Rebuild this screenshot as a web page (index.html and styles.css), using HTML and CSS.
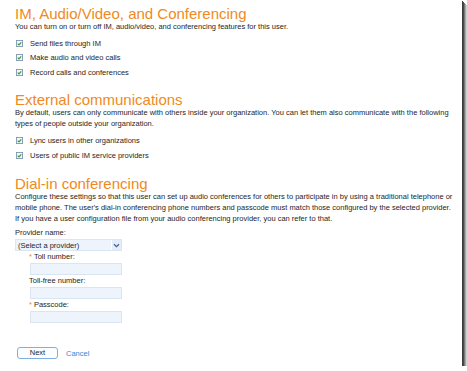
FILE: index.html
```html
<!DOCTYPE html>
<html>
<head>
<meta charset="utf-8">
<link rel="stylesheet" href="styles.css">
</head>
<body>
<div class="frame">
  <section class="sec sec-im">
    <h2 class="title">IM, Audio/Video, and Conferencing</h2>
    <p class="desc">You can turn on or turn off IM, audio/video, and conferencing features for this user.</p>
    <ul class="checks">
      <li><span class="cb"><svg viewBox="0 0 8 8" width="8" height="8"><rect x="0.5" y="0.5" width="7" height="7" fill="#f4f7fb" stroke="#7d93ad"/><path d="M2 4.2 L3.4 5.6 L6 2.6" fill="none" stroke="#2e9c3a" stroke-width="1.3"/></svg></span>Send files through IM</li>
      <li><span class="cb"><svg viewBox="0 0 8 8" width="8" height="8"><rect x="0.5" y="0.5" width="7" height="7" fill="#f4f7fb" stroke="#7d93ad"/><path d="M2 4.2 L3.4 5.6 L6 2.6" fill="none" stroke="#2e9c3a" stroke-width="1.3"/></svg></span>Make audio and video calls</li>
      <li><span class="cb"><svg viewBox="0 0 8 8" width="8" height="8"><rect x="0.5" y="0.5" width="7" height="7" fill="#f4f7fb" stroke="#7d93ad"/><path d="M2 4.2 L3.4 5.6 L6 2.6" fill="none" stroke="#2e9c3a" stroke-width="1.3"/></svg></span>Record calls and conferences</li>
    </ul>
  </section>
  <section class="sec sec-ext">
    <h2 class="title">External communications</h2>
    <p class="desc desc-wide">By default, users can only communicate with others inside your organization. You can let them also communicate with the following types of people outside your organization.</p>
    <ul class="checks checks-ext">
      <li><span class="cb"><svg viewBox="0 0 8 8" width="8" height="8"><rect x="0.5" y="0.5" width="7" height="7" fill="#f4f7fb" stroke="#7d93ad"/><path d="M2 4.2 L3.4 5.6 L6 2.6" fill="none" stroke="#2e9c3a" stroke-width="1.3"/></svg></span>Lync users in other organizations</li>
      <li><span class="cb"><svg viewBox="0 0 8 8" width="8" height="8"><rect x="0.5" y="0.5" width="7" height="7" fill="#f4f7fb" stroke="#7d93ad"/><path d="M2 4.2 L3.4 5.6 L6 2.6" fill="none" stroke="#2e9c3a" stroke-width="1.3"/></svg></span>Users of public IM service providers</li>
    </ul>
  </section>
  <section class="sec sec-dial">
    <h2 class="title">Dial-in conferencing</h2>
    <p class="desc desc-wide">Configure these settings so that this user can set up audio conferences for others to participate in by using a traditional telephone or mobile phone. The user's dial-in conferencing phone numbers and passcode must match those configured by the selected provider.<br>If you have a user configuration file from your audio conferencing provider, you can refer to that.</p>
    <div class="label label-provider">Provider name:</div>
    <div class="select"><span class="select-text">(Select a provider)</span><span class="select-arrow"><svg viewBox="0 0 8 6" width="7" height="5"><path d="M1 1.5 L4 4.5 L7 1.5" fill="none" stroke="#3d5f8c" stroke-width="1.4"/></svg></span></div>
    <div class="subfields">
      <div class="label"><span class="req">*</span>Toll number:</div>
      <div class="input"></div>
      <div class="label">Toll-free number:</div>
      <div class="input"></div>
      <div class="label"><span class="req">*</span>Passcode:</div>
      <div class="input"></div>
    </div>
  </section>
  <div class="actions">
    <button class="btn">Next</button>
    <a class="link" href="#">Cancel</a>
  </div>
</div>
</body>
</html>
```
FILE: styles.css
```css
html, body {
  margin: 0;
  padding: 0;
  background: #ffffff;
  overflow: hidden;
}
.frame {
  width: 462px;
  height: 366px;
  box-sizing: border-box;
  padding: 6.5px 0 0 15px;
  background: #ffffff;
  box-shadow: 1px 1px 0 #3c3c3c, 2px 2px 0 #4a4a4a, 3px 3px 0 #7a7a7a, 4px 4px 0 #a8a8a8, 5px 5px 0 #d0d0d0;
  font-family: "Liberation Sans", Arial, sans-serif;
  color: #262626;
  font-size: 7.5px;
  overflow: hidden;
}
.sec { margin: 0; }
.title {
  margin: 0;
  font-weight: 400;
  font-size: 15px;
  line-height: 13.5px;
  color: #ef8a22;
}
.desc {
  margin: 0.5px 0 0;
  font-size: 7.5px;
  line-height: 11px;
}
.desc-wide { width: 445px; }
.checks {
  list-style: none;
  margin: 4.5px 0 0 1px;
  padding: 0;
}
.checks-ext { margin-top: 4.25px; }
.checks li {
  display: flex;
  align-items: center;
  gap: 7px;
  height: 14.5px;
}
.cb { display: flex; }
.cb svg { width: 7px; height: 7px; }
.sec-ext { margin-top: 13.75px; }
.sec-dial { margin-top: 14.25px; }
.label {
  line-height: 11px;
}
.label-provider { margin-top: 3.25px; }
.select {
  width: 103px;
  height: 10px;
  margin-top: 1px;
  border: 1px solid #dbe6f3;
  background: #eef4fb;
  display: flex;
  align-items: center;
  justify-content: space-between;
  padding-left: 2px;
  color: #1f1f1f;
}
.select-arrow {
  width: 9px;
  height: 10px;
  display: flex;
  align-items: center;
  justify-content: center;
  border-left: 1px solid #ffffff;
  background: #e4ecf7;
}
.subfields {
  margin: 0 0 0 14px;
}
.req { color: #ef8a22; margin-right: 2px; }
.input {
  width: 90px;
  height: 10px;
  border: 1px solid #d9e5f2;
  background: #eef4fb;
  margin: 1px 0 0 1px;
}
.actions {
  display: flex;
  align-items: center;
  gap: 8px;
  margin: 24px 0 0 2px;
}
.btn {
  width: 41px;
  height: 12px;
  padding: 0;
  border: 1px solid #7fb0e0;
  border-radius: 3px;
  background: #fbfdff;
  font-family: "Liberation Sans", Arial, sans-serif;
  font-size: 7.5px;
  color: #262626;
  line-height: 10px;
}
.link {
  color: #2d8ad6;
  text-decoration: none;
  font-size: 7.5px;
}
```
